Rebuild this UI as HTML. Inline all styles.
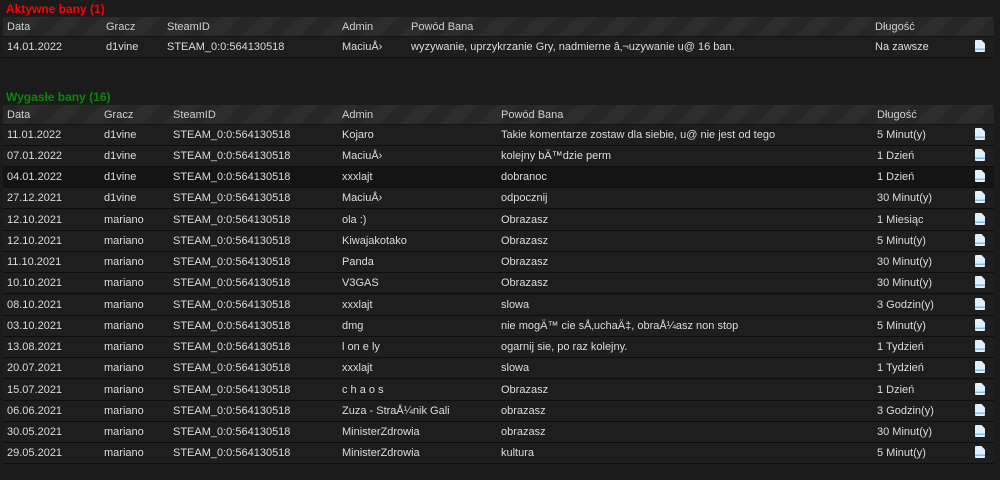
<!DOCTYPE html>
<html><head><meta charset="utf-8"><style>
*{margin:0;padding:0;box-sizing:border-box}
body{width:1000px;height:480px;background:#1b1b1b;font-family:Tahoma,"Liberation Sans",sans-serif;font-size:11px;color:#dcdcdc;position:relative;overflow:hidden}
.t{position:absolute;left:6px;font-weight:bold;font-size:12px}
.hd{position:absolute;left:3px;width:991px;height:20px;background:repeating-linear-gradient(135deg,#272727 0 14px,#2d2d2d 14px 28px);border-bottom:1px solid #111;color:#d0d0d0}
.r{position:absolute;left:3px;width:991px;height:21px;background:#1e1e1e;border-bottom:1px solid #0e0e0e}
.hd span,.r span{position:absolute;top:50%;transform:translateY(-50%);white-space:nowrap}
.ic{position:absolute;left:972px;top:3px;width:10px;height:12px;background:linear-gradient(#dfeffc 0 70%,#7fc0f0 70% 85%,#dfeffc 85%);clip-path:polygon(0 0,65% 0,100% 30%,100% 100%,0 100%);border-radius:1px}
</style></head><body>
<div class="t" style="top:2px;color:#f00">Aktywne bany (1)</div>
<div class="hd" style="top:17px"><span style="left:4px">Data</span><span style="left:103px">Gracz</span><span style="left:164px">SteamID</span><span style="left:339px">Admin</span><span style="left:408px">Powód Bana</span><span style="left:872px">Długość</span></div>
<div class="r" style="top:37px"><span style="left:4px">14.01.2022</span><span style="left:103px">d1vine</span><span style="left:164px">STEAM_0:0:564130518</span><span style="left:339px">MaciuÅ›</span><span style="left:408px">wyzywanie, uprzykrzanie Gry, nadmierne â‚¬uzywanie u@ 16 ban.</span><span style="left:872px">Na zawsze</span><i class="ic"></i></div>
<div class="t" style="top:90px;color:#0a870a">Wygasłe bany (16)</div>
<div class="hd" style="top:105px"><span style="left:4px">Data</span><span style="left:101px">Gracz</span><span style="left:170px">SteamID</span><span style="left:339px">Admin</span><span style="left:498px">Powód Bana</span><span style="left:874px">Długość</span></div>
<div class="r" style="top:125px"><span style="left:4px">11.01.2022</span><span style="left:101px">d1vine</span><span style="left:170px">STEAM_0:0:564130518</span><span style="left:339px">Kojaro</span><span style="left:498px">Takie komentarze zostaw dla siebie, u@ nie jest od tego</span><span style="left:874px">5 Minut(y)</span><i class="ic"></i></div>
<div class="r" style="top:146px"><span style="left:4px">07.01.2022</span><span style="left:101px">d1vine</span><span style="left:170px">STEAM_0:0:564130518</span><span style="left:339px">MaciuÅ›</span><span style="left:498px">kolejny bÄ™dzie perm</span><span style="left:874px">1 Dzień</span><i class="ic"></i></div>
<div class="r" style="top:167px;background:#141414"><span style="left:4px">04.01.2022</span><span style="left:101px">d1vine</span><span style="left:170px">STEAM_0:0:564130518</span><span style="left:339px">xxxlajt</span><span style="left:498px">dobranoc</span><span style="left:874px">1 Dzień</span><i class="ic"></i></div>
<div class="r" style="top:188px"><span style="left:4px">27.12.2021</span><span style="left:101px">d1vine</span><span style="left:170px">STEAM_0:0:564130518</span><span style="left:339px">MaciuÅ›</span><span style="left:498px">odpocznij</span><span style="left:874px">30 Minut(y)</span><i class="ic"></i></div>
<div class="r" style="top:210px"><span style="left:4px">12.10.2021</span><span style="left:101px">mariano</span><span style="left:170px">STEAM_0:0:564130518</span><span style="left:339px">ola :)</span><span style="left:498px">Obrazasz</span><span style="left:874px">1 Miesiąc</span><i class="ic"></i></div>
<div class="r" style="top:231px"><span style="left:4px">12.10.2021</span><span style="left:101px">mariano</span><span style="left:170px">STEAM_0:0:564130518</span><span style="left:339px">Kiwajakotako</span><span style="left:498px">Obrazasz</span><span style="left:874px">5 Minut(y)</span><i class="ic"></i></div>
<div class="r" style="top:252px"><span style="left:4px">11.10.2021</span><span style="left:101px">mariano</span><span style="left:170px">STEAM_0:0:564130518</span><span style="left:339px">Panda</span><span style="left:498px">Obrazasz</span><span style="left:874px">30 Minut(y)</span><i class="ic"></i></div>
<div class="r" style="top:273px"><span style="left:4px">10.10.2021</span><span style="left:101px">mariano</span><span style="left:170px">STEAM_0:0:564130518</span><span style="left:339px">V3GAS</span><span style="left:498px">Obrazasz</span><span style="left:874px">30 Minut(y)</span><i class="ic"></i></div>
<div class="r" style="top:295px"><span style="left:4px">08.10.2021</span><span style="left:101px">mariano</span><span style="left:170px">STEAM_0:0:564130518</span><span style="left:339px">xxxlajt</span><span style="left:498px">slowa</span><span style="left:874px">3 Godzin(y)</span><i class="ic"></i></div>
<div class="r" style="top:316px"><span style="left:4px">03.10.2021</span><span style="left:101px">mariano</span><span style="left:170px">STEAM_0:0:564130518</span><span style="left:339px">dmg</span><span style="left:498px">nie mogÄ™ cie sÅ‚uchaÄ‡, obraÅ¼asz non stop</span><span style="left:874px">5 Minut(y)</span><i class="ic"></i></div>
<div class="r" style="top:337px"><span style="left:4px">13.08.2021</span><span style="left:101px">mariano</span><span style="left:170px">STEAM_0:0:564130518</span><span style="left:339px">l on e ly</span><span style="left:498px">ogarnij sie, po raz kolejny.</span><span style="left:874px">1 Tydzień</span><i class="ic"></i></div>
<div class="r" style="top:358px"><span style="left:4px">20.07.2021</span><span style="left:101px">mariano</span><span style="left:170px">STEAM_0:0:564130518</span><span style="left:339px">xxxlajt</span><span style="left:498px">slowa</span><span style="left:874px">1 Tydzień</span><i class="ic"></i></div>
<div class="r" style="top:380px"><span style="left:4px">15.07.2021</span><span style="left:101px">mariano</span><span style="left:170px">STEAM_0:0:564130518</span><span style="left:339px">c h a o s</span><span style="left:498px">Obrazasz</span><span style="left:874px">1 Dzień</span><i class="ic"></i></div>
<div class="r" style="top:401px"><span style="left:4px">06.06.2021</span><span style="left:101px">mariano</span><span style="left:170px">STEAM_0:0:564130518</span><span style="left:339px">Zuza - StraÅ¼nik Gali</span><span style="left:498px">obrazasz</span><span style="left:874px">3 Godzin(y)</span><i class="ic"></i></div>
<div class="r" style="top:422px"><span style="left:4px">30.05.2021</span><span style="left:101px">mariano</span><span style="left:170px">STEAM_0:0:564130518</span><span style="left:339px">MinisterZdrowia</span><span style="left:498px">obrazasz</span><span style="left:874px">30 Minut(y)</span><i class="ic"></i></div>
<div class="r" style="top:443px"><span style="left:4px">29.05.2021</span><span style="left:101px">mariano</span><span style="left:170px">STEAM_0:0:564130518</span><span style="left:339px">MinisterZdrowia</span><span style="left:498px">kultura</span><span style="left:874px">5 Minut(y)</span><i class="ic"></i></div>
</body></html>
